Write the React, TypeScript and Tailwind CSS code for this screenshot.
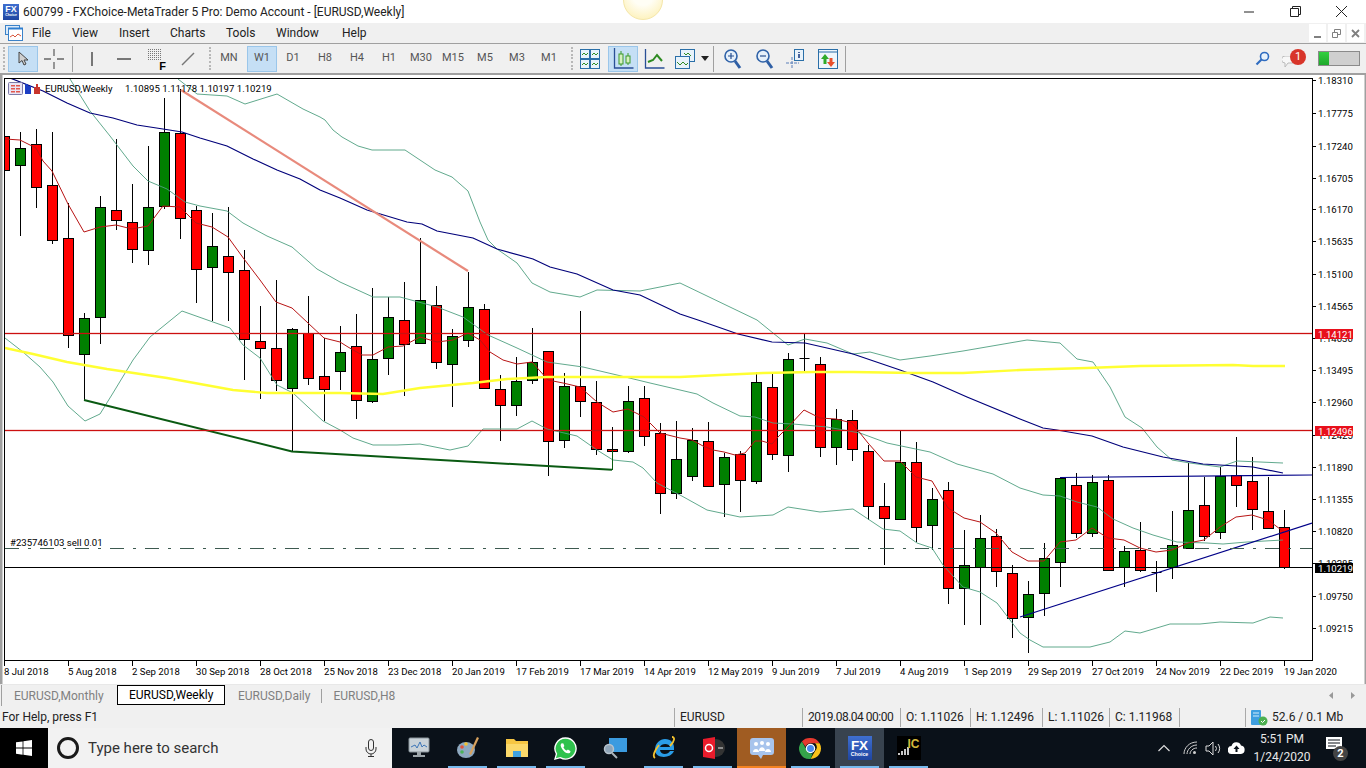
import type { ReactNode } from 'react';

const ui = "font-['Roboto',sans-serif]";

// top, bottom, high, low, up(green) - one row per weekly bar, 16px apart
const bars: [number, number, number, number, number][] = [
  [136, 170, 120, 176, 0], [148, 165, 132, 236, 1], [144, 187, 129, 208, 0], [185, 240, 132, 244, 0],
  [238, 335, 203, 348, 0], [318, 354, 313, 400, 1], [207, 317, 196, 344, 1], [210, 220, 139, 230, 0],
  [222, 249, 184, 263, 0], [207, 250, 146, 265, 1], [132, 206, 98, 209, 1], [133, 218, 89, 239, 0],
  [210, 269, 206, 303, 0], [246, 267, 213, 321, 1], [256, 272, 207, 321, 0], [270, 339, 250, 380, 0],
  [341, 348, 306, 399, 0], [348, 380, 280, 391, 0], [329, 388, 328, 452, 1], [333, 378, 296, 385, 0],
  [376, 389, 338, 421, 0], [352, 371, 326, 390, 1], [346, 400, 314, 419, 0], [359, 401, 288, 403, 1],
  [317, 358, 297, 375, 1], [320, 344, 282, 396, 0], [300, 343, 238, 343, 1], [305, 362, 286, 369, 0],
  [336, 364, 329, 407, 1], [307, 340, 272, 347, 1], [309, 388, 304, 388, 0], [389, 405, 375, 441, 0],
  [381, 405, 357, 416, 1], [362, 380, 328, 384, 1], [351, 441, 351, 476, 0], [386, 440, 373, 448, 1],
  [386, 401, 311, 417, 0], [402, 449, 381, 455, 0], [449, 451, 427, 470, 0], [401, 451, 386, 453, 1],
  [398, 436, 386, 446, 0], [433, 493, 423, 514, 0], [459, 493, 421, 499, 1], [440, 476, 428, 481, 1],
  [441, 486, 422, 487, 0], [457, 484, 453, 517, 1], [454, 480, 451, 512, 0], [382, 481, 372, 484, 1],
  [387, 454, 374, 460, 0], [359, 455, 353, 472, 1], [358, 358, 334, 372, 1], [364, 447, 357, 457, 0],
  [419, 447, 409, 465, 1], [420, 449, 410, 461, 0], [451, 506, 445, 520, 0], [506, 518, 483, 565, 0],
  [462, 519, 431, 519, 1], [462, 527, 442, 542, 0], [499, 525, 488, 550, 1], [490, 588, 482, 604, 0],
  [565, 588, 530, 625, 1], [538, 567, 515, 625, 1], [536, 571, 529, 587, 0], [573, 618, 565, 638, 0],
  [594, 617, 581, 653, 1], [558, 593, 543, 616, 1], [478, 562, 478, 587, 1], [485, 533, 473, 538, 0],
  [482, 533, 475, 537, 1], [480, 570, 475, 571, 0], [551, 567, 546, 587, 1], [550, 570, 522, 572, 0],
  [572, 572, 561, 592, 1], [545, 567, 511, 579, 1], [510, 548, 463, 549, 1], [505, 536, 477, 541, 0],
  [476, 532, 467, 539, 1], [475, 485, 437, 507, 0], [481, 509, 457, 530, 0], [511, 528, 477, 529, 0],
  [527, 567, 510, 569, 0],
];

const blueMa = '5,76 43,91 67,103 90,113 113,118 137,125 163,129 182,132 200,138 227,146 253,159 277,170 300,179 320,190 340,198 367,210 407,222 422,224 437,231 473,238 497,249 533,259 550,267 577,274 613,290 640,295 680,314 698,320 738,334 772,342 805,343 827,348 853,354 900,370 933,382 967,397 1020,419 1043,428 1057,430 1092,436 1123,447 1163,457 1203,464 1253,467 1283,473';
const bandHigh = '178,79 197,94 227,96 245,104 277,94 303,109 320,117 325,120 333,130 342,137 358,146 372,150 405,150 435,170 452,177 468,191 480,222 488,240 497,249 517,263 532,283 550,292 580,297 597,290 640,291 680,283 757,320 773,333 788,345 805,339 827,343 853,354 870,352 900,360 930,356 963,351 1027,340 1060,343 1077,359 1093,362 1110,387 1125,417 1142,428 1157,447 1172,460 1190,463 1220,467 1237,461 1283,463';
const bandMid = '70,79 90,111 110,136 133,166 148,181 167,189 185,202 200,206 227,211 243,223 267,236 292,247 317,269 340,282 373,297 400,297 437,307 463,317 488,335 517,348 547,362 583,367 617,375 650,383 680,390 697,394 713,403 740,416 755,417 773,423 793,424 827,427 860,433 887,443 930,452 957,464 993,474 1020,488 1043,495 1060,496 1077,502 1097,507 1113,519 1133,528 1153,535 1177,542 1207,543 1223,544 1247,542 1283,540';
const bandLow = '5,338 23,352 40,367 53,382 68,406 85,421 100,414 113,393 133,360 150,337 182,311 213,322 230,328 243,345 260,358 277,385 293,393 323,421 340,430 353,438 373,445 397,445 420,444 450,450 468,446 483,429 517,429 532,421 547,429 577,436 597,450 613,460 633,462 643,468 657,483 680,495 707,510 740,517 773,515 788,507 820,512 853,509 883,529 900,531 917,543 932,548 943,565 963,587 980,592 997,603 1020,633 1030,640 1043,647 1090,647 1110,642 1125,631 1140,633 1170,624 1200,624 1220,622 1253,623 1270,617 1283,618';
const redMa = '5,139 20,140 36,148 43,161 52,171 68,204 84,232 100,227 116,225 132,229 148,226 163,206 180,207 196,223 212,227 228,237 244,259 260,280 276,302 292,308 308,323 324,338 340,342 348,347 362,355 373,355 388,347 403,346 420,337 437,342 453,340 468,333 480,340 490,352 503,360 517,364 532,362 548,380 563,383 580,387 597,402 613,412 628,409 644,417 660,433 680,438 692,440 703,446 713,450 724,452 735,455 745,453 755,441 762,441 772,444 778,437 788,427 804,410 820,418 836,419 852,423 868,443 884,461 900,461 916,477 932,481 948,508 964,518 980,522 996,533 1012,552 1028,561 1044,561 1060,542 1076,540 1092,528 1108,538 1124,540 1140,548 1156,552 1172,550 1188,543 1204,540 1220,527 1236,517 1252,515 1268,520 1284,532';
const yellowMa = '5,348 33,354 67,362 107,369 167,378 233,390 267,393 293,393 340,393 383,394 420,388 473,383 507,379 547,377 597,377 680,377 720,375 763,373 813,372 853,372 913,373 963,373 1020,370 1087,368 1140,366 1233,365 1253,366 1285,366';

const prices: [string, number][] = [
  ['1.18310', 80], ['1.17775', 113], ['1.17240', 146], ['1.16705', 178], ['1.16170', 209], ['1.15635', 241],
  ['1.15100', 274], ['1.14565', 306], ['1.14030', 338], ['1.13495', 370], ['1.12960', 402], ['1.12425', 435],
  ['1.11890', 467], ['1.11355', 499], ['1.10820', 531], ['1.10285', 563], ['1.09750', 596], ['1.09215', 628],
];
const dates = ['8 Jul 2018', '5 Aug 2018', '2 Sep 2018', '30 Sep 2018', '28 Oct 2018', '25 Nov 2018', '23 Dec 2018', '20 Jan 2019', '17 Feb 2019', '17 Mar 2019', '14 Apr 2019', '12 May 2019', '9 Jun 2019', '7 Jul 2019', '4 Aug 2019', '1 Sep 2019', '29 Sep 2019', '27 Oct 2019', '24 Nov 2019', '22 Dec 2019', '19 Jan 2020'];

function Chart() {
  const font = { fontFamily: 'Roboto, sans-serif', fontSize: 9.6 };
  return (
    <svg viewBox="0 75 1366 609" className="block h-[609px] w-[1366px]" style={font}>
      <defs>
        <clipPath id="plot">
          <rect x="5" y="79" width="1307" height="581" />
        </clipPath>
      </defs>
      <rect x="0" y="75" width="1366" height="609" fill="#fff" />
      <rect x="0" y="75" width="2.5" height="609" fill="#a0a0a0" />
      <rect x="1364.5" y="75" width="1.5" height="609" fill="#a0a0a0" />

      <g clipPath="url(#plot)">
        {bars.map(([t, b, h, l, up], i) => {
          const x = 4.5 + 16 * i;
          return (
            <g key={i}>
              <line x1={x} x2={x} y1={h} y2={l} stroke="#000" />
              {t === b ? (
                <line x1={x - 5} x2={x + 5} y1={t + 0.5} y2={t + 0.5} stroke="#000" />
              ) : (
                <rect x={x - 5} y={t + 0.5} width="10" height={b - t} fill={up ? '#008000' : '#ff0000'} stroke="#000" />
              )}
            </g>
          );
        })}
        <polyline points={bandHigh} fill="none" stroke="#4f9f80" strokeWidth="0.9" />
        <polyline points={bandMid} fill="none" stroke="#4f9f80" strokeWidth="0.9" />
        <polyline points={bandLow} fill="none" stroke="#4f9f80" strokeWidth="0.9" />
        <polyline points={blueMa} fill="none" stroke="#00007a" strokeWidth="1.2" />
        <polyline points={redMa} fill="none" stroke="#b81414" />
        <polyline points={yellowMa} fill="none" stroke="#ffff33" strokeWidth="2.4" />
        <line x1="181" y1="90" x2="468" y2="271" stroke="#e88a7c" strokeWidth="2.2" />
        <polyline points="84,400 292,451.5 612,469.7" fill="none" stroke="#0a5a12" strokeWidth="2" />
        <line x1="612.5" y1="450" x2="612.5" y2="470" stroke="#0a5a12" />
        <line x1="1020" y1="617" x2="1312" y2="523" stroke="#000088" strokeWidth="1.2" />
        <line x1="1060" y1="477.5" x2="1312" y2="475" stroke="#000088" strokeWidth="1.2" />
        <line x1="5" x2="1312" y1="333.5" y2="333.5" stroke="#cc1010" strokeOpacity="0.15" strokeWidth="3" />
        <line x1="5" x2="1312" y1="430.5" y2="430.5" stroke="#cc1010" strokeOpacity="0.15" strokeWidth="3" />
        <line x1="5" x2="1312" y1="333.5" y2="333.5" stroke="#cc1010" />
        <line x1="5" x2="1312" y1="430.5" y2="430.5" stroke="#cc1010" />
        <line x1="5" x2="1312" y1="548.5" y2="548.5" stroke="#3d5a50" strokeDasharray="14 9 3 9" />
        <line x1="5" x2="1312" y1="567.5" y2="567.5" stroke="#000" />
      </g>

      <rect x="4.500" y="78.500" width="1308" height="582" fill="none" stroke="#000" />

      {/* small legend icons */}
      <rect x="8.500" y="82.500" width="14" height="12" rx="1" fill="#e9e4f4" stroke="#7d7ba8" />
      <path d="M11 85h4v1.5h-4zM16 85h4v1.5h-4zM11 88h4v1.5h-4zM16 88h4v1.5h-4zM11 91h4v1.5h-4zM16 91h4v1.5h-4z" fill="#e2574c" />
      <path d="M25 84h3v2h3v8h-6z" fill="#1d3fc4" />
      <path d="M34 87h2v-3h2v3h2v7h-6z" fill="#c8352c" />

      <text x="45" y="91.500" fill="#000">EURUSD,Weekly</text>
      <text x="125" y="91.500" fill="#000">1.10895 1.11178 1.10197 1.10219</text>
      <text x="10" y="546" fill="#000">#235746103 sell 0.01</text>

      {prices.map(([p, y]) => (
        <g key={p}>
          <line x1="1312" x2="1316" y1={y + 0.5} y2={y + 0.5} stroke="#000" />
          <text x="1318" y={y + 4} fill="#000">{p}</text>
        </g>
      ))}
      {dates.map((d, i) => (
        <g key={d}>
          <line x1={4.5 + 64 * i} x2={4.5 + 64 * i} y1="661" y2="666" stroke="#000" />
          <text x={4 + 64 * i} y="675" fill="#000">{d}</text>
        </g>
      ))}

      <rect x="1315" y="329" width="38" height="10" fill="#e8101c" />
      <text x="1318" y="337.500" fill="#fff">1.14121</text>
      <rect x="1315" y="426" width="38" height="10" fill="#e8101c" />
      <text x="1318" y="434.500" fill="#fff">1.12496</text>
      <rect x="1315" y="563" width="38" height="10" fill="#000" />
      <text x="1318" y="571.500" fill="#fff">1.10219</text>
    </svg>
  );
}

function FxLogo({ size }: { size: number }) {
  return (
    <div
      className="flex flex-col items-center justify-center bg-gradient-to-b from-[#3f6fd0] to-[#1f45a0] font-['Liberation_Sans',sans-serif] font-bold leading-none text-white"
      style={{ width: size, height: size }}
    >
      <span style={{ fontSize: size * 0.56 }}>FX</span>
      <span style={{ fontSize: size * 0.22 }}>Choice</span>
    </div>
  );
}

const Grip = () => (
  <div className="mx-[2px] flex h-[26px] w-[3px] flex-col justify-between py-[1px]">
    {[0, 1, 2, 3, 4, 5, 6].map((i) => (
      <span key={i} className="h-[2px] w-[2px] bg-[#b8b8b8]" />
    ))}
  </div>
);

const Sep = () => <div className="h-[26px] w-px bg-[#a0a0a0]" />;

function Tool({ w = 32, on, children }: { w?: number; on?: boolean; children: ReactNode }) {
  return (
    <div
      className={`flex h-[26px] items-center justify-center ${on ? 'border border-[#9ac6ea] bg-[#c5dff5]' : ''}`}
      style={{ width: w }}
    >
      {children}
    </div>
  );
}

function Period({ label, on, w = 32 }: { label: string; on?: boolean; w?: number }) {
  return (
    <Tool w={w} on={on}>
      <span className="text-[11px] text-[#555]">{label}</span>
    </Tool>
  );
}

const Glass = ({ sign }: { sign: 'plus' | 'minus' }) => (
  <svg width="20" height="22" viewBox="0 0 20 22" className="ml-[3px]">
    <circle cx="8" cy="8" r="6" fill="#e6f0fa" stroke="#2f62a8" strokeWidth="1.6" />
    <path d="M12 13l5 7" stroke="#2f5fa5" strokeWidth="3" />
    <path d={sign === 'plus' ? 'M5 8h6M8 5v6' : 'M5 8h6'} stroke="#274f8f" strokeWidth="1.2" />
  </svg>
);

function Toolbar() {
  return (
    <div className="flex h-[32px] items-center border-y border-b-2 border-y-[#a0a0a0] bg-[#f0f0f0] pl-[1px] pr-[6px]">
      <Grip />
      <Tool w={30} on>
        <svg width="12" height="16" viewBox="0 0 12 16">
          <path d="M2 1v11l3-2.5 2 4.5 2-1-2-4h4z" fill="#cfcfcf" stroke="#444" />
        </svg>
      </Tool>
      <div className="w-[1px]" />
      <Tool w={30}>
        <svg width="20" height="20" viewBox="0 0 20 20" stroke="#666" strokeWidth="1.3">
          <path d="M0 10h7M13 10h7M10 0v7M10 13v7" />
        </svg>
      </Tool>
      <div className="w-[3px]" />
      <Sep />
      <div className="w-[3px]" />
      <Tool>
        <div className="h-[14px] w-[2px] bg-[#777]" />
      </Tool>
      <Tool>
        <div className="h-[2px] w-[14px] bg-[#777]" />
      </Tool>
      <Tool>
        <div className="relative h-[20px] w-[16px]">
          <svg width="14" height="11" viewBox="0 0 14 11" stroke="#777" strokeDasharray="1 1">
            <path d="M0 .5h14M0 2.500h14M0 4.500h14M0 6.500h14M0 8.500h14M0 10.500h14" />
          </svg>
          <span className="absolute bottom-[-3px] right-[-2px] font-['Liberation_Sans',sans-serif] text-[11px] font-bold leading-none text-black">
            F
          </span>
        </div>
      </Tool>
      <Tool>
        <svg width="14" height="14" viewBox="0 0 14 14">
          <path d="M1 13L13 1" stroke="#777" strokeWidth="1.5" />
        </svg>
      </Tool>
      <div className="w-[3px]" />
      <Grip />
      <Period label="MN" w={30} />
      <div className="w-[3px]" />
      <Period label="W1" w={30} on />
      <Period label="D1" />
      <Period label="H8" />
      <Period label="H4" />
      <Period label="H1" />
      <Period label="M30" />
      <Period label="M15" />
      <Period label="M5" />
      <Period label="M3" />
      <Period label="M1" />
      <div className="w-[4px]" />
      <Grip />
      <Tool w={28}>
        <svg width="20" height="20" viewBox="0 0 20 20" fill="#e8f2fa" stroke="#2a6fa8">
          <rect x="0.5" y="0.5" width="9" height="9" />
          <rect x="10.5" y="0.5" width="9" height="9" />
          <rect x="0.5" y="10.5" width="9" height="9" />
          <rect x="10.5" y="10.5" width="9" height="9" />
          <path d="M2 6l2-2 2 2 2-2M12 6l2-2 2 2 2-2M2 16l2-2 2 2 2-2M12 16l2-2 2 2 2-2" fill="none" stroke="#2e8b22" />
        </svg>
      </Tool>
      <div className="w-[4px]" />
      <Tool w={30} on>
        <svg width="22" height="24" viewBox="0 0 22 24">
          <path d="M2.5 1v20h19" fill="none" stroke="#2a4f96" strokeWidth="1.3" />
          <rect x="7" y="7" width="4" height="10" fill="#d8f0c0" stroke="#3d9a2a" />
          <rect x="14" y="9" width="4" height="7" fill="#d8f0c0" stroke="#3d9a2a" />
          <path d="M9 4v3M9 17v2M16 6v3M16 16v2" stroke="#3d9a2a" />
        </svg>
      </Tool>
      <Tool>
        <svg width="22" height="22" viewBox="0 0 22 22">
          <path d="M2.5 1v19h19" fill="none" stroke="#2a4f96" strokeWidth="1.3" />
          <path d="M5 14l5-2 4-5 5 6" fill="none" stroke="#2e8b22" strokeWidth="2" />
        </svg>
      </Tool>
      <Tool w={30}>
        <svg width="20" height="20" viewBox="0 0 20 20" fill="#e8f2fa" stroke="#2a6fa8">
          <rect x="5.5" y="0.5" width="14" height="12" />
          <rect x="0.5" y="7.5" width="14" height="12" />
          <path d="M2 13l3 3 3-3 3 3 2-2M9 4l2 2 2-2 3 3" fill="none" stroke="#2e8b22" />
        </svg>
      </Tool>
      <svg width="8" height="5" viewBox="0 0 8 5" className="ml-[1px] mr-[4px]">
        <path d="M0 0h8L4 5z" fill="#222" />
      </svg>
      <Sep />
      <div className="w-[2px]" />
      <Tool w={30}>
        <Glass sign="plus" />
      </Tool>
      <div className="w-[1px]" />
      <Tool>
        <Glass sign="minus" />
      </Tool>
      <Tool>
        <svg width="20" height="20" viewBox="0 0 20 20">
          <path d="M7 8v11M1 14h13" stroke="#5a7fb8" strokeDasharray="3 1" />
          <rect x="9.5" y="0.5" width="9" height="11" fill="#e8f2fa" stroke="#2a6fa8" />
          <path d="M14 3v1M14 5v4" stroke="#1f3f86" strokeWidth="1.6" />
        </svg>
      </Tool>
      <Tool w={34}>
        <svg width="20" height="20" viewBox="0 0 20 20">
          <rect x="0.5" y="0.5" width="19" height="19" fill="#eef5fb" stroke="#2a6fa8" />
          <path d="M0 3h20" stroke="#2a6fa8" />
          <path d="M7 5l-4 5h2.5v5h3v-5H11z" fill="#2faa2a" />
          <path d="M13 18l4-5h-2.5V9h-3v4H9z" fill="#e8502c" />
        </svg>
      </Tool>
      <Sep />
      <div className="flex-1" />
      <svg width="15" height="15" viewBox="0 0 15 15" className="mr-[12px]">
        <circle cx="9.5" cy="5.5" r="4" fill="#e8f2fb" stroke="#2f6cc0" strokeWidth="1.6" />
        <path d="M6.5 8.5L1.5 13.5" stroke="#2f6cc0" strokeWidth="2.2" />
      </svg>
      <div className="relative mr-[12px] h-[20px] w-[24px]">
        <svg width="14" height="12" viewBox="0 0 14 12" className="absolute bottom-[1px] left-0">
          <path d="M3 0h8a3 3 0 010 7H6l-3 4V7a3 3 0 010-7z" fill="#f7f7f7" stroke="#bbb" />
        </svg>
        <span className="absolute right-0 top-0 flex h-[16px] w-[16px] items-center justify-center rounded-full bg-[#d8352a] text-[11px] leading-none text-white">
          1
        </span>
      </div>
      <div className="flex h-[15px] w-[42px] border border-[#8a8a8a] bg-[#cfcfcf]">
        <div className="h-full w-[10px] bg-gradient-to-b from-[#32d040] to-[#1fa82c]" />
      </div>
    </div>
  );
}

function TaskIcon({ w = 49, open, active, children }: { w?: number; open?: boolean; active?: string; children: ReactNode }) {
  return (
    <div className={`relative flex h-full items-center justify-center ${active ?? ''}`} style={{ width: w }}>
      {children}
      {open && <span className="absolute bottom-0 left-[5px] right-[5px] h-[2px] bg-[#76b9ed]" />}
    </div>
  );
}

function Chrome() {
  return (
    <svg width="23" height="23" viewBox="0 0 24 24">
      <path d="M12 1a11 11 0 019.5 5.5H12a5.5 5.5 0 00-5.2 3.7L3 4.6A11 11 0 0112 1z" fill="#e5392f" />
      <path d="M21.5 6.500A11 11 0 0112 23l4.700-8.200a5.500 5.500 0 00.1-8.300z" fill="#f9c21a" />
      <path d="M3 4.600l4.600 8.100a5.500 5.500 0 006.700 4.300L12 23A11 11 0 013 4.600z" fill="#35a34a" />
      <circle cx="12" cy="12" r="4.300" fill="#4a8bf0" stroke="#fff" strokeWidth="1.300" />
    </svg>
  );
}

function Taskbar() {
  return (
    <div className={`flex h-[40px] items-stretch bg-[#0a1119] text-white ${ui}`}>
      <div className="flex w-[48px] items-center justify-center bg-black">
        <svg width="16" height="16" viewBox="0 0 16 16" fill="#fff">
          <path d="M0 2.300l6.600-.9v6.200H0zM7.400 1.300L16 0v7.600H7.400zM0 8.400h6.600v6.300L0 13.700zM7.400 8.400H16V16l-8.600-1.200z" />
        </svg>
      </div>
      <div className="flex w-[344px] items-center bg-[#f2f2f2] text-[#333]">
        <div className="ml-[9px] h-[22px] w-[22px] rounded-full border-[3px] border-[#1a1a1a]" />
        <span className="ml-[9px] flex-1 text-[15px]">Type here to search</span>
        <svg width="14" height="18" viewBox="0 0 14 18" fill="none" stroke="#333" className="mr-[14px]">
          <rect x="4.500" y="0.500" width="5" height="11" rx="2.500" />
          <path d="M2 8v2a5 5 0 0010 0V8M7 15v2M4 17.500h6" />
        </svg>
      </div>
      <div className="w-[2px]" />
      <TaskIcon>
        <svg width="24" height="22" viewBox="0 0 24 22">
          <rect x="2" y="1" width="20" height="14" rx="1" fill="#c9d2d8" stroke="#8a949b" />
          <path d="M4 10l4-2 2 3 3-6 2 5 2-2 3 2" fill="none" stroke="#3d76b8" />
          <path d="M10 15h4v3h4v2H6v-2h4z" fill="#9ca4a9" />
        </svg>
      </TaskIcon>
      <TaskIcon open>
        <svg width="24" height="24" viewBox="0 0 24 24">
          <ellipse cx="10" cy="14" rx="9" ry="8" fill="#8ea9c0" />
          <circle cx="6" cy="11" r="1.800" fill="#e5533a" />
          <circle cx="10" cy="8" r="1.800" fill="#f1c232" />
          <circle cx="6" cy="16" r="1.800" fill="#4bb35a" />
          <path d="M21 1l2 1-8 17-2-1z" fill="#d8a25e" />
        </svg>
      </TaskIcon>
      <TaskIcon open>
        <svg width="22" height="20" viewBox="0 0 22 20">
          <path d="M0 1h8l2 2h12v16H0z" fill="#f6c643" />
          <path d="M0 6h22v13H0z" fill="#fbd96b" />
          <path d="M7 13h8v6H7z" fill="#3fa2e0" />
        </svg>
      </TaskIcon>
      <TaskIcon open>
        <svg width="23" height="23" viewBox="0 0 24 24">
          <path d="M12 1a11 11 0 00-9.400 16.700L1 23l5.500-1.500A11 11 0 1012 1z" fill="#2fc24d" stroke="#fff" strokeWidth="1.400" />
          <path d="M8 6.500c-1.500 1-1.500 3 .5 6s4.500 5 7 4.500c1.500-.5 2-2 1.500-2.500l-2.500-1.500-1.200 1.200c-1-.2-3-2-3.500-3.500l1-1.200-1-2.700z" fill="#fff" />
        </svg>
      </TaskIcon>
      <TaskIcon>
        <svg width="24" height="22" viewBox="0 0 24 22">
          <path d="M6 1h18v14H6z" fill="#3b9be0" />
          <circle cx="6" cy="12" r="4.500" fill="#8fa5b8" stroke="#b8c4ce" strokeWidth="1.500" />
          <path d="M9 16l5 5" stroke="#aab4bc" strokeWidth="2" />
        </svg>
      </TaskIcon>
      <TaskIcon open>
        <svg width="24" height="24" viewBox="0 0 24 24">
          <path d="M3 14c0-7 5-11 10-11 6 0 9 4 9 9v2H8c.5 5 8 5 10 1h4c-3 8-19 8-19-1zm5-3h10c-.5-4-9-4-10 0z" fill="#2a9de8" />
          <path d="M20 1c3 0 3 4-2 9M3 22c-3-2 0-8 4-13" fill="none" stroke="#f4c32f" strokeWidth="1.800" />
        </svg>
      </TaskIcon>
      <TaskIcon open>
        <svg width="26" height="24" viewBox="0 0 26 24">
          <circle cx="16" cy="12" r="9" fill="#333" />
          <path d="M3 3l12-2v22L3 21z" fill="#ea1c2c" />
          <circle cx="9" cy="12" r="3.500" fill="none" stroke="#fff" strokeWidth="1.500" />
          <path d="M18 12h5" stroke="#aaa" strokeWidth="1.500" />
        </svg>
      </TaskIcon>
      <TaskIcon active="bg-[#a05c22]">
        <svg width="24" height="24" viewBox="0 0 24 24">
          <rect x="0" y="2" width="24" height="17" rx="3" fill="#a8c4ec" />
          <path d="M8 19l3 4 2-4z" fill="#a8c4ec" />
          <circle cx="6" cy="8" r="2" fill="#fff" />
          <circle cx="12" cy="7" r="2" fill="#fff" />
          <circle cx="18" cy="8" r="2" fill="#fff" />
          <path d="M3 16c0-4 6-4 6 0M9 15c0-5 6-5 6 0M15 16c0-4 6-4 6 0" fill="#fff" />
        </svg>
        <span className="absolute bottom-0 left-0 right-0 h-[2px] bg-[#f58220]" />
      </TaskIcon>
      <TaskIcon open>
        <Chrome />
      </TaskIcon>
      <TaskIcon open active="bg-[#38434f]">
        <FxLogo size={24} />
      </TaskIcon>
      <TaskIcon open>
        <div className="relative flex h-[24px] w-[24px] items-end justify-center bg-black font-['Liberation_Sans',sans-serif]">
          <svg width="12" height="12" viewBox="0 0 12 12" className="absolute bottom-[4px] left-[1px]">
            <path d="M1 11V9M4 11V7M7 11V5M10 11V3" stroke="#c8c8c8" strokeWidth="2" />
          </svg>
          <span className="absolute right-[1px] top-[2px] text-[12px] font-bold leading-none text-[#d4b93c]">IC</span>
        </div>
      </TaskIcon>
      <div className="flex-1" />
      <div className="flex items-center">
        <svg width="12" height="8" viewBox="0 0 12 8" fill="none" stroke="#ddd" strokeWidth="1.200" className="mr-[13px]">
          <path d="M0.500 7L6 1.500 11.500 7" />
        </svg>
        <svg width="15" height="14" viewBox="0 0 15 14" fill="none" stroke="#cfcfcf" className="mr-[7px]">
          <path d="M1 13c0-6 5-12 13-12M4 13c0-4 4-9 10-9M7 13c0-3 3-6 7-6" />
          <circle cx="11.500" cy="11.500" r="1.500" fill="#cfcfcf" stroke="none" />
        </svg>
        <svg width="17" height="15" viewBox="0 0 17 15" fill="none" stroke="#ddd" className="mr-[6px]">
          <path d="M1 5h3l4-4v13l-4-4H1zM10.500 5a4 4 0 010 5M13 3a7 7 0 010 9" />
        </svg>
        <svg width="17" height="12" viewBox="0 0 17 12" className="mr-[6px]">
          <path d="M4 12a4 4 0 01-.5-8A5 5 0 0113 3.500 4.300 4.300 0 0113 12z" fill="#fff" />
          <path d="M8.500 3.500L5.500 7h2v3h2V7h2z" fill="#0a1119" />
        </svg>
        <div className="flex w-[62px] flex-col items-center text-[12px] leading-[18px] text-[#e8e8e8]">
          <span>5:51 PM</span>
          <span>1/24/2020</span>
        </div>
        <div className="relative ml-[13px] mr-[22px] h-[24px] w-[18px]">
          <svg width="17" height="15" viewBox="0 0 17 15" className="absolute left-0 top-[1px]">
            <path d="M0 0h16v12H0z" fill="#fff" />
            <path d="M2 3h12M2 6h12M2 9h8" stroke="#0a1119" />
          </svg>
          <span className="absolute bottom-[-1px] left-[7px] flex h-[15px] w-[15px] items-center justify-center rounded-full bg-[#444] text-[11px] font-bold leading-none text-white">
            2
          </span>
        </div>
      </div>
    </div>
  );
}

function Cell({ w, children }: { w?: number; children?: ReactNode }) {
  return (
    <div className="flex h-[19px] items-center overflow-hidden whitespace-nowrap border-l border-[#a9a9a9] pl-[5px]" style={{ width: w }}>
      {children}
    </div>
  );
}

export default function App() {
  return (
    <div className="relative flex h-[768px] w-[1366px] flex-col overflow-hidden bg-white">
      <div className={`flex h-[23px] items-center bg-white ${ui}`}>
        <div className="ml-[3px] mr-[4px]">
          <FxLogo size={16} />
        </div>
        <span className="text-[12px] text-[#222]">600799 - FXChoice-MetaTrader 5 Pro: Demo Account - [EURUSD,Weekly]</span>
        <div className="flex-1" />
        <svg width="12" height="2" viewBox="0 0 12 2" className="mr-[34px]">
          <path d="M0 1h10" stroke="#222" />
        </svg>
        <svg width="11" height="11" viewBox="0 0 11 11" fill="none" stroke="#222" className="mr-[35px]">
          <path d="M0.500 2.500h8v8h-8zM2.500 2.500v-2h8v8h-2" />
        </svg>
        <svg width="11" height="11" viewBox="0 0 11 11" stroke="#222" className="mr-[19px]">
          <path d="M0 0l11 11M11 0L0 11" />
        </svg>
      </div>

      <div className={`flex h-[20px] items-center bg-[#f0f0f0] text-[12px] text-[#222] ${ui}`}>
        <svg width="18" height="16" viewBox="0 0 18 16" className="ml-[5px] mr-[9px]">
          <rect x="0.500" y="0.500" width="14" height="9" fill="#dcebfa" stroke="#3b82c8" />
          <rect x="3.500" y="3.500" width="14" height="12" fill="#fff" stroke="#3b82c8" />
          <path d="M3 3.500h15" stroke="#2f7fd0" strokeWidth="2" />
          <path d="M5 12l3-2 2 2 3-3 3 2" fill="none" stroke="#d8553a" />
        </svg>
        <span className="w-[40px]">File</span>
        <span className="w-[47px]">View</span>
        <span className="w-[51px]">Insert</span>
        <span className="w-[56px]">Charts</span>
        <span className="w-[50px]">Tools</span>
        <span className="w-[66px]">Window</span>
        <span>Help</span>
        <div className="flex-1" />
        <div className="flex h-[18px] gap-[2px] pr-[2px]">
          <div className="flex w-[17px] items-end justify-center bg-white pb-[4px]">
            <div className="h-[2px] w-[7px] bg-[#808080]" />
          </div>
          <div className="flex w-[17px] items-center justify-center bg-white">
            <svg width="9" height="9" viewBox="0 0 9 9" fill="none" stroke="#808080">
              <path d="M0.500 3.500h5v5h-5zM2.500 3V0.500h6v5H6" />
            </svg>
          </div>
          <div className="flex w-[17px] items-center justify-center bg-white">
            <svg width="9" height="9" viewBox="0 0 9 9" stroke="#808080" strokeWidth="1.800">
              <path d="M1 1l7 7M8 1L1 8" />
            </svg>
          </div>
        </div>
      </div>

      <div className={ui}>
        <Toolbar />
      </div>

      <Chart />

      <div className={`flex h-[22px] items-stretch border-t border-[#e8e8e8] bg-[#f0f0f0] text-[12px] text-[#808080] ${ui}`}>
        <div className="ml-[1px] flex w-[116px] items-center border-l border-[#a0a0a0] pl-[12px]">EURUSD,Monthly</div>
        <div className="mb-[1px] flex w-[108px] items-center border border-black bg-white pl-[11px] text-black">EURUSD,Weekly</div>
        <div className="flex items-center pl-[13px]">EURUSD,Daily</div>
        <div className="ml-[11px] mt-[4px] h-[14px] w-px bg-[#a0a0a0]" />
        <div className="flex items-center pl-[11px]">EURUSD,H8</div>
        <div className="flex-1" />
        <div className="flex items-center gap-[18px] pr-[11px]">
          <svg width="4" height="7" viewBox="0 0 4 7">
            <path d="M4 0v7L0 3.500z" fill="#999" />
          </svg>
          <svg width="4" height="7" viewBox="0 0 4 7">
            <path d="M0 0v7l4-3.500z" fill="#999" />
          </svg>
        </div>
      </div>

      <div className={`flex h-[22px] items-center bg-[#f0f0f0] text-[12px] text-[#222] ${ui}`}>
        <div className="w-[674px] pl-[2px]">For Help, press F1</div>
        <Cell w={128}>EURUSD</Cell>
        <Cell w={98}>
          <span className="tracking-[-0.5px]">2019.08.04 00:00</span>
        </Cell>
        <Cell w={70}>O: 1.11026</Cell>
        <Cell w={72}>H: 1.12496</Cell>
        <Cell w={67}>L: 1.11026</Cell>
        <Cell w={70}>C: 1.11968</Cell>
        <Cell w={66} />
        <Cell>
          <svg width="17" height="17" viewBox="0 0 17 17" className="mr-[4px]">
            <rect x="0" y="1" width="10" height="15" rx="1" fill="#3f9fe0" />
            <path d="M2 4h6M2 7h6" stroke="#d5ecfb" />
            <circle cx="12" cy="12" r="4.500" fill="#4caf50" />
            <path d="M10 12l1.500 1.500L14 11" fill="none" stroke="#fff" />
          </svg>
          52.6 / 0.1 Mb
        </Cell>
      </div>

      <Taskbar />

      {/* yellow glow behind the title bar, left over from the capture */}
      <div className="pointer-events-none absolute left-[623px] top-[-20px] h-[40px] w-[40px] rounded-full border border-[#f5e6a8] bg-[radial-gradient(circle_at_50%_35%,#fffef5_35%,#fdf0b4_90%)]" />
    </div>
  );
}
